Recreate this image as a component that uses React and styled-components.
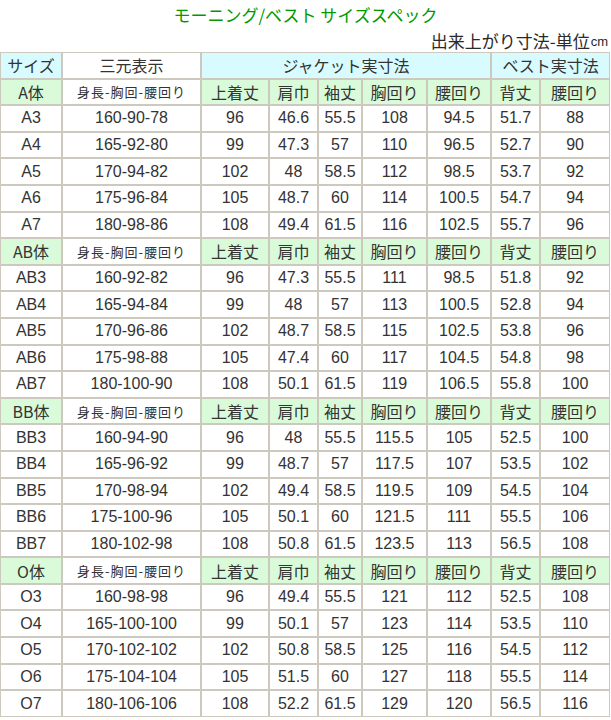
import React from "react";
import styled, { createGlobalStyle } from "styled-components";

const GlobalStyle = createGlobalStyle`
  body {
    margin: 0;
    background: #ffffff;
    font-family: "Liberation Sans", "Noto Sans CJK JP", sans-serif;
    color: #2a2a2a;
  }
`;

const Page = styled.div`
  width: 611px;
  display: flex;
  flex-direction: column;
`;

const Title = styled.div`
  height: 28px;
  display: flex;
  align-items: center;
  justify-content: center;
  font-family: "Noto Sans CJK JP", sans-serif;
  font-size: 17px;
  color: #009a00;
`;

const Unit = styled.div`
  height: 24px;
  padding-right: 3px;
  display: flex;
  align-items: center;
  justify-content: flex-end;
  font-family: "Noto Sans CJK JP", sans-serif;
  font-size: 17px;
  color: #2a2a2a;

  small {
    font-family: "Liberation Sans", sans-serif;
    font-size: 13px;
    margin-left: 1px;
    margin-top: 3px;
  }
`;

const Table = styled.table`
  width: 610px;
  table-layout: fixed;
  border-collapse: separate;
  border-spacing: 0;
`;

const bg = {
  cyan: "#d8fbff",
  green: "#d9fbd9",
  white: "#ffffff",
};

const Cell = styled.td`
  height: 24.6px;
  padding: 0;
  border: 1px solid #cdc9bf;
  text-align: center;
  vertical-align: middle;
  white-space: nowrap;
  color: #333333;
  background: ${({ $tone }) => bg[$tone || "white"]};
  font-family: ${({ $jp }) =>
    $jp ? '"Noto Sans CJK JP", sans-serif' : '"Liberation Sans", "Noto Sans CJK JP", sans-serif'};
  font-size: ${({ $small }) => ($small ? "13px" : "16px")};
  letter-spacing: ${({ $small }) => ($small ? "1px" : "0")};
  line-height: 1;
`;

const widths = [62, 139, 68, 49, 44, 65, 64, 49, 70];
const subHeads = ["上着丈", "肩巾", "袖丈", "胸回り", "腰回り", "背丈", "腰回り"];

const groups = [
  {
    name: "A体",
    rows: [
      ["A3", "160-90-78", "96", "46.6", "55.5", "108", "94.5", "51.7", "88"],
      ["A4", "165-92-80", "99", "47.3", "57", "110", "96.5", "52.7", "90"],
      ["A5", "170-94-82", "102", "48", "58.5", "112", "98.5", "53.7", "92"],
      ["A6", "175-96-84", "105", "48.7", "60", "114", "100.5", "54.7", "94"],
      ["A7", "180-98-86", "108", "49.4", "61.5", "116", "102.5", "55.7", "96"],
    ],
  },
  {
    name: "AB体",
    rows: [
      ["AB3", "160-92-82", "96", "47.3", "55.5", "111", "98.5", "51.8", "92"],
      ["AB4", "165-94-84", "99", "48", "57", "113", "100.5", "52.8", "94"],
      ["AB5", "170-96-86", "102", "48.7", "58.5", "115", "102.5", "53.8", "96"],
      ["AB6", "175-98-88", "105", "47.4", "60", "117", "104.5", "54.8", "98"],
      ["AB7", "180-100-90", "108", "50.1", "61.5", "119", "106.5", "55.8", "100"],
    ],
  },
  {
    name: "BB体",
    rows: [
      ["BB3", "160-94-90", "96", "48", "55.5", "115.5", "105", "52.5", "100"],
      ["BB4", "165-96-92", "99", "48.7", "57", "117.5", "107", "53.5", "102"],
      ["BB5", "170-98-94", "102", "49.4", "58.5", "119.5", "109", "54.5", "104"],
      ["BB6", "175-100-96", "105", "50.1", "60", "121.5", "111", "55.5", "106"],
      ["BB7", "180-102-98", "108", "50.8", "61.5", "123.5", "113", "56.5", "108"],
    ],
  },
  {
    name: "O体",
    rows: [
      ["O3", "160-98-98", "96", "49.4", "55.5", "121", "112", "52.5", "108"],
      ["O4", "165-100-100", "99", "50.1", "57", "123", "114", "53.5", "110"],
      ["O5", "170-102-102", "102", "50.8", "58.5", "125", "116", "54.5", "112"],
      ["O6", "175-104-104", "105", "51.5", "60", "127", "118", "55.5", "114"],
      ["O7", "180-106-106", "108", "52.2", "61.5", "129", "120", "56.5", "116"],
    ],
  },
];

const App = () => {
  return (
    <Page>
      <GlobalStyle />
      <Title>モーニング/ベスト サイズスペック</Title>
      <Unit>
        出来上がり寸法-単位<small>cm</small>
      </Unit>
      <Table>
        <colgroup>
          {widths.map((w, i) => (
            <col key={i} style={{ width: w }} />
          ))}
        </colgroup>
        <tbody>
          <tr>
            <Cell $tone="cyan" $jp>サイズ</Cell>
            <Cell $jp>三元表示</Cell>
            <Cell $tone="cyan" $jp colSpan={5}>ジャケット実寸法</Cell>
            <Cell $tone="cyan" $jp colSpan={2}>ベスト実寸法</Cell>
          </tr>
          {groups.map((g) => (
            <React.Fragment key={g.name}>
              <tr>
                <Cell $tone="green" $jp>{g.name}</Cell>
                <Cell $jp $small>身長-胸回-腰回り</Cell>
                {subHeads.map((h, i) => (
                  <Cell key={i} $tone="green" $jp>{h}</Cell>
                ))}
              </tr>
              {g.rows.map((r) => (
                <tr key={r[0]}>
                  {r.map((v, i) => (
                    <Cell key={i}>{v}</Cell>
                  ))}
                </tr>
              ))}
            </React.Fragment>
          ))}
        </tbody>
      </Table>
    </Page>
  );
};

export default App;
